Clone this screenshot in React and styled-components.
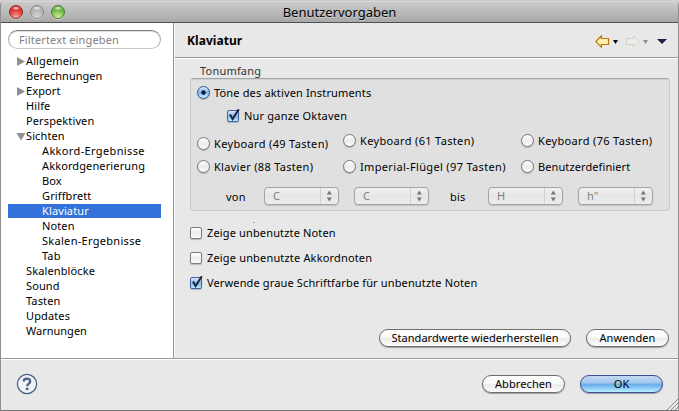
import React from 'react';
import styled, { createGlobalStyle } from 'styled-components';

const GlobalStyle = createGlobalStyle`
  *, *::before, *::after { box-sizing: border-box; }
  body { margin: 0; background: #d8d8d8; overflow: hidden; }
`;

const Window = styled.div`
  width: 679px;
  height: 411px;
  display: flex;
  flex-direction: column;
  border: 1px solid #8f8f8f;
  border-top: 0;
  border-bottom-color: #777;
  border-radius: 5px 5px 0 0;
  overflow: hidden;
  background: #e8e8e8;
  color: #000;
  font: 400 11px/15px "Noto Sans", "Open Sans", sans-serif;
  letter-spacing: 0.17px;
  white-space: nowrap;
`;

const TitleBar = styled.header`
  flex: none;
  height: 23px;
  display: grid;
  grid-template-columns: 66px 1fr 66px;
  align-items: center;
  background: linear-gradient(#b9b9b9 0, #e2e2e2 1px, #cbcbcb 2px, #a8a8a8 22px);
  border-bottom: 1px solid #515151;
`;

const Lights = styled.div`
  display: flex;
  gap: 7px;
  padding: 2px 0 0 8px;
`;

const Light = styled.span`
  width: 14px;
  height: 14px;
  border-radius: 50%;
  border: 1px solid ${p => p.$rim};
  background:
    radial-gradient(ellipse 4px 2px at 50% 18%, #ffffffe0, #ffffff00),
    radial-gradient(circle at 50% 100%, ${p => p.$glow} 0, ${p => p.$tone} 62%);
  box-shadow: 0 1px 0 #ffffff70;
`;

const Title = styled.h1`
  margin: 0;
  padding: 2px 0 0;
  font-size: 13px;
  font-weight: 400;
  line-height: 18px;
  letter-spacing: 0;
  text-align: center;
  text-shadow: 0 1px 0 #ffffff60;
`;

const Content = styled.div`
  flex: none;
  height: 335px;
  display: flex;
`;

const Sidebar = styled.nav`
  width: 173px;
  padding: 7px 12px 0 7px;
  background: #fff;
  border-right: 1px solid #949494;
`;

const Search = styled.div`
  height: 19px;
  padding: 1px 0 0 10px;
  border: 1px solid #a9a9a9;
  border-top-color: #7c7c7c;
  border-bottom-color: #c9c9c9;
  border-radius: 10px;
  color: #7f7f7f;
  letter-spacing: 0.14px;
  box-shadow: inset 0 1px 1px #ddd;
`;

const Tree = styled.ul`
  margin: 5px 0 0;
  padding: 0;
  list-style: none;
`;

const TreeRow = styled.li`
  height: 14px;
  margin-bottom: 1px;
  display: flex;
  align-items: center;
  line-height: 14px;
  letter-spacing: ${p => p.$track ?? 0.12}px;
  background: ${p => (p.$selected ? '#3272d9' : 'transparent')};
  color: ${p => (p.$selected ? '#fff' : '#000')};
`;

const TreeText = styled.span`
  padding-left: ${p => p.$pad}px;
`;

const Twisty = styled.svg`
  flex: none;
  width: 8px;
  height: 9px;
  margin-left: 8.5px;
  margin-right: 1.5px;
  fill: #8f8f8f;
  overflow: visible;
`;

const Main = styled.main`
  flex: 1;
  border-left: 1px solid #f8f8f8;
  display: flex;
  flex-direction: column;
`;

const PageHeader = styled.div`
  height: 35px;
  display: flex;
  align-items: center;
  padding: 2px 11px 0 12px;
  border-bottom: 1px solid #9a9a9a;
  box-shadow: 0 1px 0 #fff;
`;

const PageTitle = styled.h2`
  flex: 1;
  margin: 0;
  font-size: 12px;
  line-height: 16px;
  letter-spacing: 0.05px;
`;

const Nav = styled.div`
  display: flex;
  align-items: center;
`;

const NavArrow = styled.svg`
  width: 15px;
  height: 13px;
  margin-left: ${p => p.$gap ?? 0}px;
`;

const Caret = styled.svg`
  width: ${p => p.$w}px;
  height: ${p => p.$h}px;
  margin: 1px 0 0 ${p => p.$gap}px;
`;

const Page = styled.section`
  flex: 1;
  display: flex;
  flex-direction: column;
  padding: 6px 8px 0 15px;
`;

const GroupLabel = styled.div`
  height: 14px;
  padding-left: 10px;
  line-height: 14px;
  color: #333;
  letter-spacing: 0.2px;
`;

const Group = styled.div`
  height: 133px;
  border: 1px solid #cacaca;
  border-top-color: #a6a6a6;
  border-radius: 4px;
  background: #e0e0e0;
  box-shadow: inset 0 1px 1px #cfcfcf;
  padding: 6px 0 0 6px;
`;

const Option = styled.label`
  display: flex;
  align-items: center;
  gap: ${p => p.$gap ?? 4}px;
  height: 15px;
  letter-spacing: ${p => p.$track ?? 0.2}px;
  margin-top: ${p => p.$top ?? 0}px;
  margin-left: ${p => p.$indent ?? 0}px;
`;

const Radio = styled.span`
  flex: none;
  width: 13px;
  height: 13px;
  border-radius: 50%;
  border: 1px solid ${p => (p.$on ? '#34518c' : '#777')};
  background: ${p => (p.$on
    ? 'radial-gradient(circle at 50% 50%, #10182c 0 1.8px, #10182c00 2.6px), linear-gradient(#e2eefb, #7db5ec 50%, #c4f1ff)'
    : 'linear-gradient(#fff, #ececec 50%, #fcfcfc)')};
  box-shadow: 0 1px 1px #00000035;
`;

const CheckShape = styled.span`
  flex: none;
  width: 12px;
  height: 12px;
  border-radius: 2px;
  border: 1px solid ${p => (p.$on ? '#43639c' : '#7c7c7c')};
  background: ${p => (p.$on
    ? 'linear-gradient(#dcebfa, #82b8ec 50%, #b9e7ff)'
    : 'linear-gradient(#fff, #eee 50%, #fbfbfb)')};
  box-shadow: 0 1px 1px #00000035;
`;

const Tick = styled.svg`
  display: block;
  width: 12px;
  height: 13px;
  margin: -3px 0 0 0;
  overflow: visible;
`;

const RadioGrid = styled.div`
  display: grid;
  grid-template-columns: 146px 178px 1fr;
  row-gap: 8px;
  margin-top: 10px;
`;

const RangeRow = styled.div`
  display: flex;
  align-items: center;
  height: 18px;
  margin-top: 13px;
`;

const RangeLabel = styled.span`
  width: ${p => p.$w}px;
  padding: 0 0 0 ${p => p.$pad}px;
  letter-spacing: 0.2px;
`;

const Select = styled.span`
  width: 75px;
  height: 18px;
  margin-right: 15px;
  padding-left: 8px;
  display: flex;
  align-items: center;
  border: 1px solid #a3a3a3;
  border-radius: 4px;
  background: linear-gradient(#f1f1f1, #e6e6e6 50%, #ededed);
  box-shadow: 0 1px 1px #00000025;
  color: #7f7f7f;
`;

const SelectValue = styled.span`
  flex: 1;
  line-height: 16px;
  padding-bottom: 1px;
`;

const Stepper = styled.svg`
  width: 18px;
  height: 16px;
  border-left: 1px solid #d2d2d2;
  fill: #757575;
`;

const Speck = styled.span`
  width: 2px;
  height: 1px;
  margin: 11px 0 0 63px;
  background: #aaa;
`;

const Checks = styled.div`
  margin-top: 2px;
  display: flex;
  flex-direction: column;
  gap: 10px;
`;

const Actions = styled.div`
  display: flex;
  justify-content: flex-end;
  gap: 15px;
  margin: ${p => p.$top ?? 0}px ${p => p.$right ?? 0}px 0 0;
`;

const Button = styled.button`
  width: ${p => p.$w}px;
  height: 18px;
  padding: 0;
  border: 1px solid ${p => (p.$primary ? '#414b93' : '#6e6e6e')};
  border-radius: 9px;
  background: ${p => (p.$primary
    ? 'linear-gradient(#c3d9f1 0, #a0c6ee 45%, #66aae8 50%, #82c3f4 70%, #baf0ff)'
    : 'linear-gradient(#fff 0, #f9f9f9 48%, #ececec 52%, #fbfbfb)')};
  box-shadow: 0 1px 1px #00000050;
  font: inherit;
  line-height: 16px;
  letter-spacing: ${p => p.$track ?? 0.1}px;
  color: #000;
`;

const Footer = styled.footer`
  position: relative;
  flex: 1;
  display: flex;
  align-items: flex-start;
  justify-content: space-between;
  padding: 14px 15px 0 15px;
  border-top: 1px solid #999;
  box-shadow: inset 0 1px 0 #fff;
`;

const HelpIcon = styled.svg`
  width: 22px;
  height: 22px;
`;

const Grip = styled.svg`
  position: absolute;
  right: 0;
  bottom: 0;
  width: 12px;
  height: 12px;
`;

const treeItems = [
  { text: 'Allgemein', icon: 'closed' },
  { text: 'Berechnungen', track: 0.02 },
  { text: 'Export', icon: 'closed' },
  { text: 'Hilfe' },
  { text: 'Perspektiven' },
  { text: 'Sichten', icon: 'open' },
  { text: 'Akkord-Ergebnisse', nested: true, track: 0.36 },
  { text: 'Akkordgenerierung', nested: true },
  { text: 'Box', nested: true },
  { text: 'Griffbrett', nested: true },
  { text: 'Klaviatur', nested: true, selected: true },
  { text: 'Noten', nested: true },
  { text: 'Skalen-Ergebnisse', nested: true, track: 0.3 },
  { text: 'Tab', nested: true },
  { text: 'Skalenblöcke' },
  { text: 'Sound' },
  { text: 'Tasten' },
  { text: 'Updates' },
  { text: 'Warnungen', track: 0 },
];

const ranges = [
  { text: 'Keyboard (49 Tasten)', top: 3, track: 0.34 },
  { text: 'Keyboard (61 Tasten)', track: 0.34 },
  { text: 'Keyboard (76 Tasten)', track: 0.34 },
  { text: 'Klavier (88 Tasten)', track: 0.3 },
  { text: 'Imperial-Flügel (97 Tasten)', track: 0.34 },
  { text: 'Benutzerdefiniert', track: 0.1 },
];

const TreeIcon = ({ kind }) => (
  <Twisty viewBox="0 0 8 9">
    <path d={kind === 'open' ? 'M-.5 1H8.5L4 8.5Z' : 'M0 0V9L8 4.5Z'} />
  </Twisty>
);

const Checkbox = ({ checked }) => (
  <CheckShape $on={checked}>
    {checked && (
      <Tick viewBox="0 0 12 13">
        <path d="M2 6.5L4.6 11L10.8 1.2" fill="none" stroke="#1b2438" strokeWidth="2" />
      </Tick>
    )}
  </CheckShape>
);

const Combo = ({ value }) => (
  <Select>
    <SelectValue>{value}</SelectValue>
    <Stepper viewBox="0 0 17 16">
      <path d="M5.8 6.5h5L8.3 2.5zM5.8 9.5h5l-2.5 4z" />
    </Stepper>
  </Select>
);

export default function App() {
  return (
    <>
      <GlobalStyle />
      <Window>
        <TitleBar>
          <Lights>
            <Light $rim="#8e2a28" $tone="#e03433" $glow="#ffb5a8" />
            <Light $rim="#8b8b8b" $tone="#b3b3b3" $glow="#dcdcdc" />
            <Light $rim="#4b7935" $tone="#6fb548" $glow="#d9f6a0" />
          </Lights>
          <Title>Benutzervorgaben</Title>
        </TitleBar>
        <Content>
          <Sidebar>
            <Search>Filtertext eingeben</Search>
            <Tree>
              {treeItems.map(item => (
                <TreeRow key={item.text} $selected={item.selected} $track={item.track}>
                  {item.icon && <TreeIcon kind={item.icon} />}
                  <TreeText $pad={item.icon ? 0 : item.nested ? 34 : 18}>{item.text}</TreeText>
                </TreeRow>
              ))}
            </Tree>
          </Sidebar>
          <Main>
            <PageHeader>
              <PageTitle>Klaviatur</PageTitle>
              <Nav>
                <NavArrow viewBox="0 0 15 13">
                  <path d="M.8 6.5L6.5.8V3.5H13.5V9.5H6.5V12.2Z" fill="#fff0ae" stroke="#bd7b0c" strokeWidth="1.2" />
                </NavArrow>
                <Caret viewBox="0 0 5 4" $w={5} $h={4} $gap={3}><path d="M0 0H5L2.5 4Z" /></Caret>
                <NavArrow viewBox="0 0 15 13" $gap={7}>
                  <path d="M14.2 6.5L8.5.8V3.5H1.5V9.5H8.5V12.2Z" fill="#ecece8" stroke="#cfcfcb" />
                </NavArrow>
                <Caret viewBox="0 0 5 4" $w={5} $h={4} $gap={3}><path d="M0 0H5L2.5 4Z" fill="#8a8a8a" /></Caret>
                <Caret viewBox="0 0 10 5" $w={10} $h={5} $gap={9}><path d="M0 0H10L5 5Z" fill="#201c4d" /></Caret>
              </Nav>
            </PageHeader>
            <Page>
              <GroupLabel>Tonumfang</GroupLabel>
              <Group>
                <Option $track={0.16}><Radio $on />Töne des aktiven Instruments</Option>
                <Option $top={8} $indent={30} $gap={5}><Checkbox checked />Nur ganze Oktaven</Option>
                <RadioGrid>
                  {ranges.map(r => (
                    <Option key={r.text} $top={r.top} $track={r.track}><Radio />{r.text}</Option>
                  ))}
                </RadioGrid>
                <RangeRow>
                  <RangeLabel $w={67} $pad={29}>von</RangeLabel>
                  <Combo value="C" />
                  <Combo value="C" />
                  <RangeLabel $w={44} $pad={6}>bis</RangeLabel>
                  <Combo value="H" />
                  <Combo value={'h"'} />
                </RangeRow>
              </Group>
              <Speck />
              <Checks>
                <Option $gap={5} $track={0.15}><Checkbox />Zeige unbenutzte Noten</Option>
                <Option $gap={5} $track={0.17}><Checkbox />Zeige unbenutzte Akkordnoten</Option>
                <Option $gap={5} $track={0.14}><Checkbox checked />Verwende graue Schriftfarbe für unbenutzte Noten</Option>
              </Checks>
              <Actions $top={39} $right={1}>
                <Button $w={192} $track={0.02}>Standardwerte wiederherstellen</Button>
                <Button $w={83}>Anwenden</Button>
              </Actions>
            </Page>
          </Main>
        </Content>
        <Footer>
          <HelpIcon viewBox="0 0 22 22" fill="none" stroke="#4b6287">
            <circle cx="11" cy="11" r="9.6" strokeWidth="1.3" fill="#f0f2f5" />
            <path d="M7.7 8.5C7.7 4.7 14.2 4.7 14.2 8.2C14.2 10.7 11.2 10.4 11.2 13.3" strokeWidth="2.3" />
            <path d="M11.1 14.7v2.4" strokeWidth="2.5" />
          </HelpIcon>
          <Actions $top={2}>
            <Button $w={83}>Abbrechen</Button>
            <Button $w={83} $primary>OK</Button>
          </Actions>
          <Grip viewBox="0 0 12 12" stroke="#8c8c8c">
            <path d="M1 12L12 1M5 12L12 5M9 12L12 9" />
          </Grip>
        </Footer>
      </Window>
    </>
  );
}
